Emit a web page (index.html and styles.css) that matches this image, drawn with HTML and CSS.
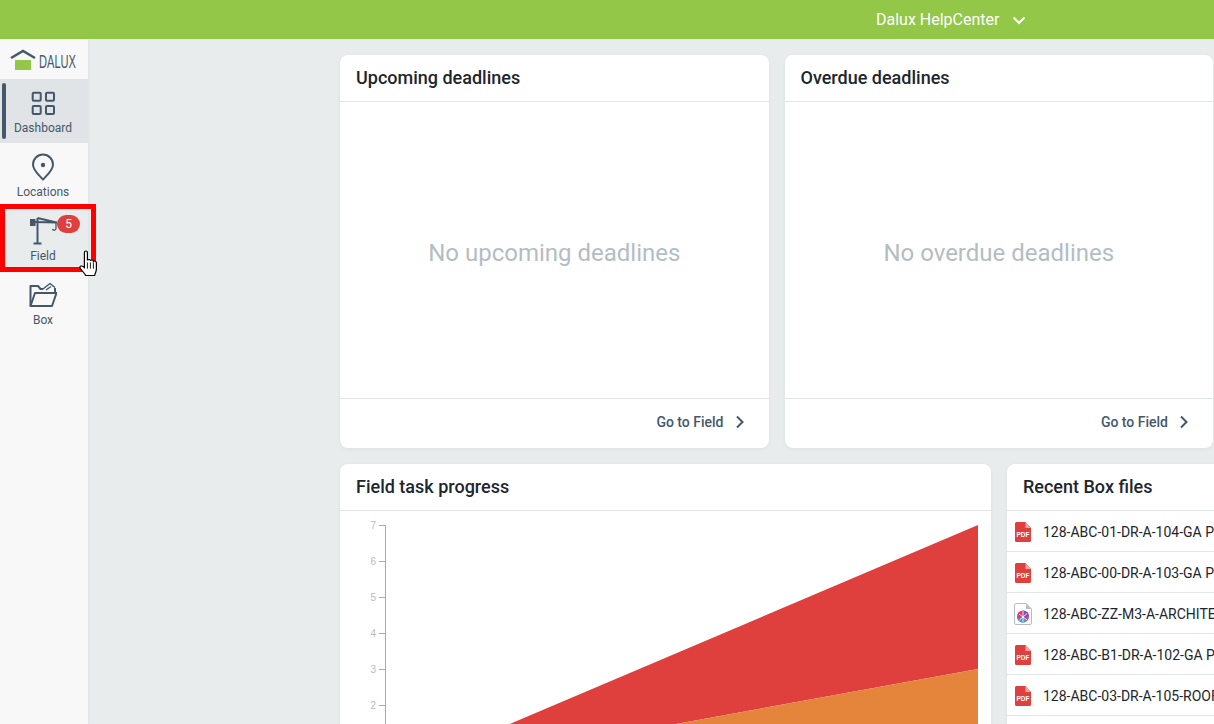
FILE: index.html
```html
<!DOCTYPE html>
<html>
<head>
    <title>Dalux Dashboard</title>
    <link rel="stylesheet" href="styles.css">
</head>
<body>

    <div class="topbar">
        <span class="topbar-title">Dalux HelpCenter</span>
        <svg class="topbar-chevron" width="14" height="14" viewBox="0 0 14 14"><path d="M1.500 4.500 7 10l5.500-5.500" fill="none" stroke="#fff" stroke-width="2"/></svg>
    </div>

    <div class="layout">
        <div class="sidebar">
            <div class="logo">
                <svg width="70" height="24" viewBox="0 0 70 24">
                    <rect x="6" y="13" width="16" height="10" fill="#92c748"/>
                    <path d="M2 11 14 4l12 7" fill="none" stroke="#44586a" stroke-width="2.500"/>
                    <text class="logo-text" x="30" y="21" textLength="37" lengthAdjust="spacingAndGlyphs">DALUX</text>
                </svg>
            </div>

            <div class="nav-item active">
                <svg width="28" height="28" viewBox="0 0 28 28" fill="none" stroke="#44586a" stroke-width="2">
                    <rect x="3.700" y="3.700" width="8" height="8" rx="1"/>
                    <rect x="17" y="3.700" width="8" height="8" rx="1"/>
                    <rect x="3.700" y="17" width="8" height="8" rx="1"/>
                    <rect x="17" y="17" width="8" height="8" rx="1"/>
                </svg>
                <span>Dashboard</span>
            </div>

            <div class="nav-item">
                <svg width="28" height="28" viewBox="0 0 28 28" fill="none" stroke="#44586a" stroke-width="2">
                    <path d="M14 26.500C10 22 4 17.500 4 11.500a10 10 0 0 1 20 0C24 17.500 18 22 14 26.500Z" stroke-linejoin="round"/>
                    <circle cx="14" cy="12" r="2.200" fill="#44586a" stroke="none"/>
                </svg>
                <span>Locations</span>
            </div>

            <div class="nav-item hovered">
                <svg width="28" height="28" viewBox="0 0 28 28" fill="none" stroke="#44586a" stroke-width="2">
                    <path d="M8.500 1V26.500M4.500 26.500H12.500"/>
                    <path d="M8.500 1 27.500 5.500 5 5" stroke-width="2" stroke-linejoin="round"/>
                    <rect x="1" y="2" width="5.500" height="7" fill="#44586a" stroke="none"/>
                    <path d="M27 5.500V11.500a1.800 1.800 0 0 1-3.500 .5" stroke-width="1.300"/>
                </svg>
                <span>Field</span>
                <div class="badge">5</div>
            </div>

            <div class="nav-item">
                <svg width="28" height="28" viewBox="0 0 28 28" fill="none" stroke="#44586a" stroke-width="2" stroke-linejoin="round">
                    <path d="M1.500 25V5H9l2.500 3H14"/>
                    <path d="M14 8 21 2.500l5 4M17 9l5-3.500" stroke-width="1.500"/>
                    <path d="M26 11V7"/>
                    <path d="M1.500 25 6 12H27.500L23 25Z"/>
                </svg>
                <span>Box</span>
            </div>
        </div>

        <div class="main">
            <div class="row">
                <div class="card deadline-card">
                    <div class="card-header">Upcoming deadlines</div>
                    <div class="empty-text">No upcoming deadlines</div>
                    <div class="card-footer">
                        <span>Go to Field</span>
                        <svg width="10" height="14" viewBox="0 0 10 14"><path d="M2 1.500 7.500 7 2 12.500" fill="none" stroke="#44586a" stroke-width="2"/></svg>
                    </div>
                </div>
                <div class="card deadline-card">
                    <div class="card-header">Overdue deadlines</div>
                    <div class="empty-text">No overdue deadlines</div>
                    <div class="card-footer">
                        <span>Go to Field</span>
                        <svg width="10" height="14" viewBox="0 0 10 14"><path d="M2 1.500 7.500 7 2 12.500" fill="none" stroke="#44586a" stroke-width="2"/></svg>
                    </div>
                </div>
            </div>

            <div class="row">
                <div class="card chart-card">
                    <div class="card-header">Field task progress</div>
                    <svg class="chart" width="651" height="214" viewBox="0 1 651 214">
                        <polygon points="45,267 638,15 638,159" fill="#df3f3d"/>
                        <polygon points="45,267 638,159 638,267" fill="#e5853b"/>
                        <path d="M45.500 15V215M39 15.500H45M39 51.500H45M39 87.500H45M39 123.500H45M39 159.500H45M39 195.500H45" fill="none" stroke="#aaa" stroke-width="1"/>
                        <g class="tick-label">
                            <text x="36" y="19">7</text>
                            <text x="36" y="55">6</text>
                            <text x="36" y="91">5</text>
                            <text x="36" y="127">4</text>
                            <text x="36" y="163">3</text>
                            <text x="36" y="199">2</text>
                        </g>
                    </svg>
                </div>

                <div class="card files-card">
                    <div class="card-header">Recent Box files</div>
                    <div class="file-row">
                        <svg width="16" height="20" viewBox="0 0 16 20"><use href="#pdf-icon"/></svg>
                        <span>128-ABC-01-DR-A-104-GA Plan Level 01</span>
                    </div>
                    <div class="file-row">
                        <svg width="16" height="20" viewBox="0 0 16 20"><use href="#pdf-icon"/></svg>
                        <span>128-ABC-00-DR-A-103-GA Plan Level 00</span>
                    </div>
                    <div class="file-row">
                        <svg class="model-icon" width="18" height="22" viewBox="0 0 18 22">
                            <path d="M2 .5H12L17.500 6V20a1.500 1.500 0 0 1-1.500 1.500H2A1.500 1.500 0 0 1 .5 20V2A1.500 1.500 0 0 1 2 .5Z" fill="#fff" stroke="#b5bec6"/>
                            <path d="M12 .5V6H17.500Z" fill="#b5bec6"/>
                            <circle cx="9" cy="13.500" r="6" fill="#d13f7a"/>
                            <path d="M3.500 16a6 6 0 0 0 9.500 2L9 13.500Z" fill="#3f9fc9"/>
                            <path d="M9 7.500a6 6 0 0 1 6 6H9Z" fill="#7c4fc4"/>
                            <path d="M5 11 13 17M13 10.500 5.500 17M9 8V19" stroke="#fff" stroke-width=".8"/>
                        </svg>
                        <span>128-ABC-ZZ-M3-A-ARCHITECTURAL MODEL</span>
                    </div>
                    <div class="file-row">
                        <svg width="16" height="20" viewBox="0 0 16 20"><use href="#pdf-icon"/></svg>
                        <span>128-ABC-B1-DR-A-102-GA Plan Level B1</span>
                    </div>
                    <div class="file-row">
                        <svg width="16" height="20" viewBox="0 0 16 20"><use href="#pdf-icon"/></svg>
                        <span>128-ABC-03-DR-A-105-ROOF Plan</span>
                    </div>
                </div>
            </div>
        </div>
    </div>

    <!-- annotation and mouse pointer from the screenshot -->
    <div class="highlight"></div>
    <svg class="pointer" width="18" height="26" viewBox="0 0 15 25" preserveAspectRatio="none">
        <path d="M4.500 2.500C4.500 .5 7 .5 7 2.500V10C7.500 8.800 9.500 8.800 9.500 10.300 10 9.300 12 9.500 12 11 12.700 10.300 14.500 10.700 14.500 12.300V18C14.500 21 13.500 22 13 24.500H5.500C5 22.500 1 18.500 .8 17 .5 15.300 2.500 15 3.500 16L4.500 17Z" fill="#fff" stroke="#000" stroke-width="1"/>
        <path d="M7 12V18M9.500 12V18M12 12V18" stroke="#000" stroke-width=".8"/>
    </svg>

    <svg width="0" height="0" class="icon-defs">
        <symbol id="pdf-icon" viewBox="0 0 16 20">
            <path d="M1.500 0H10.500L16 6V18.500A1.500 1.500 0 0 1 14.500 20H1.500A1.500 1.500 0 0 1 0 18.500V1.500A1.500 1.500 0 0 1 1.500 0Z" fill="#df3f3d"/>
            <path d="M10.500 0 16 6H10.500Z" fill="#efa5a3"/>
            <text x="8" y="14.500" text-anchor="middle" class="pdf-text">PDF</text>
        </symbol>
    </svg>

</body>
</html>
```

FILE: styles.css
```css
/* page */
body, html {
    height: 100%;
    margin: 0;
    overflow: hidden;
    font-family: "Roboto", "Liberation Sans", sans-serif;
    color: #1d262d;
    background: #e9eced;
}

/* top green bar */
.topbar {
    height: 39px;
    background: #92c748;
    display: flex;
    align-items: center;
    color: #fff;
    padding-left: 876px;
}

.topbar-title {
    font-size: 16px;
    font-weight: 400;
}

.topbar-chevron {
    margin-left: 13px;
}

.layout {
    display: flex;
    height: calc(100% - 39px);
}

/* left nav */
.sidebar {
    flex: 0 0 88px;
    background: #f8f8f8;
    box-shadow: 1px 0 3px rgba(0, 0, 0, 0.04);
}

.logo {
    height: 40px;
    display: flex;
    align-items: center;
    padding-left: 9px;
}

.logo-text {
    font-family: "Liberation Sans", sans-serif;
    font-size: 19px;
    fill: #44586a;
}

.nav-item {
    position: relative;
    height: 64px;
    box-sizing: border-box;
    padding: 10px 2px 0 0;
    display: flex;
    flex-direction: column;
    align-items: center;
    gap: 3px;
    font-size: 12px;
    line-height: 16px;
    color: #44586a;
}

.nav-item.active {
    background: #e0e4e7;
}

.nav-item.active::before {
    content: "";
    position: absolute;
    left: 2px;
    top: 4px;
    bottom: 4px;
    width: 4px;
    border-radius: 2px;
    background: #44586a;
}

.nav-item.hovered {
    background: #e9eced;
}

.badge {
    position: absolute;
    left: 57px;
    top: 8px;
    width: 23px;
    height: 18px;
    border-radius: 9px;
    background: #df3f3d;
    color: #fff;
    font-size: 12px;
    line-height: 18px;
    text-align: center;
}

/* cards */
.main {
    flex: 1;
    min-width: 0;
    overflow: hidden;
    box-sizing: border-box;
    padding: 16px 1px 0 252px;
}

.row {
    display: flex;
    gap: 16px;
    margin-bottom: 16px;
}

.card {
    background: #fff;
    border-radius: 8px;
    box-shadow: 0 1px 4px rgba(0, 0, 0, 0.05);
}

.card-header {
    height: 47px;
    box-sizing: border-box;
    padding: 0 16px;
    border-bottom: 1px solid #e3e6e8;
    font-size: 18px;
    font-weight: 500;
    line-height: 45px;
}

.deadline-card {
    flex: 1;
    height: 393px;
    display: flex;
    flex-direction: column;
}

.empty-text {
    flex: 1;
    display: flex;
    align-items: center;
    justify-content: center;
    padding-top: 6px;
    font-size: 24px;
    color: #b3bdc3;
}

.card-footer {
    height: 50px;
    box-sizing: border-box;
    border-top: 1px solid #e3e6e8;
    padding: 0 24px 3px 0;
    display: flex;
    align-items: center;
    justify-content: flex-end;
    gap: 11px;
    font-size: 14px;
    font-weight: 500;
    color: #44586a;
}

.chart-card {
    flex: 0 0 651px;
    height: 300px;
}

.chart {
    display: block;
}

.tick-label {
    font-family: "Liberation Sans", sans-serif;
    font-size: 10px;
    fill: #bdb8b2;
    text-anchor: end;
}

.files-card {
    flex: 0 0 430px;
    height: 300px;
}

.file-row {
    height: 41px;
    box-sizing: border-box;
    border-bottom: 1px solid #e3e6e8;
    display: flex;
    align-items: center;
    font-size: 14px;
    white-space: nowrap;
    padding: 2px 0 0 8px;
}

.file-row svg {
    flex: 0 0 auto;
    margin-right: 12px;
}

.file-row .model-icon {
    margin: 0 11px 0 -1px;
}

.pdf-text {
    font-family: "Liberation Sans", sans-serif;
    font-size: 6.500px;
    font-weight: 700;
    fill: #fff;
}

.icon-defs {
    position: absolute;
}

/* red box drawn on the screenshot */
.highlight {
    position: absolute;
    left: 0;
    top: 204px;
    width: 86px;
    height: 58px;
    border: 5px solid #fe0000;
}

.pointer {
    position: absolute;
    left: 79px;
    top: 250px;
}
```
